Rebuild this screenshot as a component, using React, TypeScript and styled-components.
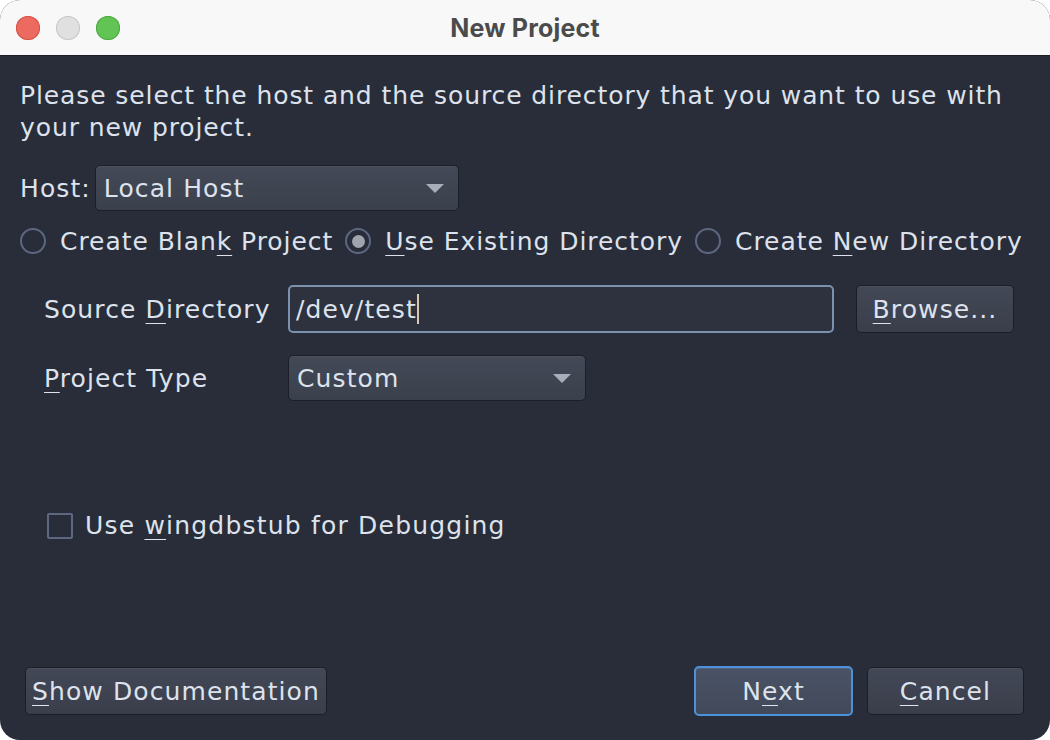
import styled, { createGlobalStyle } from "styled-components";

const GlobalStyle = createGlobalStyle`
  html, body {
    margin: 0;
    padding: 0;
    background: #ffffff;
  }
  body {
    font-family: "DejaVu Sans", "Noto Sans", sans-serif;
  }
`;

const Window = styled.div`
  width: 1050px;
  height: 740px;
  border-radius: 20px;
  overflow: hidden;
  display: flex;
  flex-direction: column;
  background: #282d39;
  color: #dde2ed;
  font-size: 25px;
  letter-spacing: 1.1px;
`;

const TitleBar = styled.div`
  height: 55px;
  flex: none;
  background: #f8f8f8;
  border-bottom: 1px solid #1b1e25;
  display: flex;
  align-items: center;
  position: relative;
`;

const Lights = styled.div`
  display: flex;
  gap: 16px;
  padding-left: 16px;
`;

const Light = styled.span<{ $fill: string; $ring: string }>`
  width: 24px;
  height: 24px;
  border-radius: 50%;
  background: ${(p) => p.$fill};
  box-shadow: inset 0 0 0 1px ${(p) => p.$ring};
`;

const Title = styled.div`
  position: absolute;
  left: 0;
  right: 0;
  text-align: center;
  font-family: Inter, "Liberation Sans", sans-serif;
  font-weight: 700;
  font-size: 25px;
  letter-spacing: 0.2px;
  color: #4b4b4b;
  pointer-events: none;
`;

const Body = styled.div`
  flex: 1;
  display: flex;
  flex-direction: column;
  padding: 24px 26px 24px 20px;
`;

const Intro = styled.p`
  margin: 0;
  line-height: 32px;
  letter-spacing: 0.9px;
  white-space: nowrap;
`;

const HostRow = styled.div`
  display: flex;
  align-items: center;
  gap: 4px;
  margin-top: 21px;
`;

const Combo = styled.div<{ $width: number }>`
  width: ${(p) => p.$width}px;
  height: 46px;
  box-sizing: border-box;
  display: flex;
  align-items: center;
  justify-content: space-between;
  padding: 0 14px 0 8px;
  border-radius: 5px;
  border: 1px solid #1c1f27;
  background: linear-gradient(#444957, #3b404d);
  box-shadow: inset 0 1px 0 #4c5160;
`;

const Arrow = styled.span`
  width: 0;
  height: 0;
  border-left: 9px solid transparent;
  border-right: 9px solid transparent;
  border-top: 9px solid #a9aebb;
`;

const RadioRow = styled.div`
  display: flex;
  align-items: center;
  margin-top: 14px;
  height: 32px;
  letter-spacing: 0.95px;
`;

const RadioItem = styled.label`
  display: flex;
  align-items: center;
  gap: 14px;
  margin-right: 12px;
  white-space: nowrap;
`;

const Radio = styled.span<{ $on?: boolean }>`
  width: 26px;
  height: 26px;
  flex: none;
  box-sizing: border-box;
  border-radius: 50%;
  border: 2px solid #5d6780;
  display: flex;
  align-items: center;
  justify-content: center;
  &::after {
    content: "";
    display: ${(p) => (p.$on ? "block" : "none")};
    width: 13px;
    height: 13px;
    border-radius: 50%;
    background: #a0a4ad;
  }
`;

const Key = styled.u`
  text-decoration-thickness: 1px;
  text-underline-offset: 5px;
`;

const Form = styled.div`
  display: grid;
  grid-template-columns: 244px auto;
  align-items: center;
  row-gap: 22px;
  padding-left: 24px;
  margin-top: 28px;
`;

const FieldLabel = styled.div`
  white-space: nowrap;
`;

const InputRow = styled.div`
  display: flex;
  align-items: center;
  gap: 22px;
`;

const TextInput = styled.div`
  width: 546px;
  height: 48px;
  box-sizing: border-box;
  border: 2px solid #7b91ad;
  border-radius: 5px;
  background: #2d323e;
  display: flex;
  align-items: center;
  padding-left: 6px;
`;

const Caret = styled.span`
  display: inline-block;
  width: 2px;
  height: 30px;
  background: #d8c9b0;
`;

const Button = styled.div<{ $width: number; $default?: boolean }>`
  width: ${(p) => p.$width}px;
  height: ${(p) => (p.$default ? 50 : 48)}px;
  box-sizing: border-box;
  display: flex;
  align-items: center;
  justify-content: center;
  border-radius: 5px;
  border: ${(p) => (p.$default ? "2px solid #4a92dc" : "1px solid #1a1d24")};
  background: ${(p) =>
    p.$default
      ? "linear-gradient(#4a5366, #414959)"
      : "linear-gradient(#434856, #3a3e4b)"};
  box-shadow: inset 0 1px 0 ${(p) => (p.$default ? "#56607a" : "#4b5060")};
  white-space: nowrap;
`;

const CheckRow = styled.label`
  display: flex;
  align-items: center;
  gap: 12px;
  padding-left: 27px;
  margin-top: 110px;
  letter-spacing: 1.2px;
`;

const Checkbox = styled.span`
  width: 26px;
  height: 26px;
  box-sizing: border-box;
  border: 2px solid #5d6780;
  border-radius: 2px;
`;

const Footer = styled.div`
  margin-top: auto;
  display: flex;
  align-items: center;
  padding-left: 5px;
`;

const FooterRight = styled.div`
  margin-left: auto;
  display: flex;
  align-items: center;
  gap: 14px;
`;

export default function App() {
  return (
    <>
      <GlobalStyle />
      <Window>
        <TitleBar>
          <Lights>
            <Light $fill="#ec6a5f" $ring="#d25548" />
            <Light $fill="#e0e0e0" $ring="#c8c8c8" />
            <Light $fill="#61c454" $ring="#50a943" />
          </Lights>
          <Title>New Project</Title>
        </TitleBar>
        <Body>
          <Intro>
            Please select the host and the source directory that you want to use with
            <br />
            your new project.
          </Intro>
          <HostRow>
            <span>Host:</span>
            <Combo $width={364}>
              <span>Local Host</span>
              <Arrow />
            </Combo>
          </HostRow>
          <RadioRow>
            <RadioItem>
              <Radio />
              <span>
                Create Blan<Key>k</Key> Project
              </span>
            </RadioItem>
            <RadioItem>
              <Radio $on />
              <span>
                <Key>U</Key>se Existing Directory
              </span>
            </RadioItem>
            <RadioItem>
              <Radio />
              <span>
                Create <Key>N</Key>ew Directory
              </span>
            </RadioItem>
          </RadioRow>
          <Form>
            <FieldLabel>
              Source <Key>D</Key>irectory
            </FieldLabel>
            <InputRow>
              <TextInput>
                /dev/test
                <Caret />
              </TextInput>
              <Button $width={158}>
                <span>
                  <Key>B</Key>rowse...
                </span>
              </Button>
            </InputRow>
            <FieldLabel>
              <Key>P</Key>roject Type
            </FieldLabel>
            <div>
              <Combo $width={298}>
                <span>Custom</span>
                <Arrow />
              </Combo>
            </div>
          </Form>
          <CheckRow>
            <Checkbox />
            <span>
              Use <Key>w</Key>ingdbstub for Debugging
            </span>
          </CheckRow>
          <Footer>
            <Button $width={302}>
              <span>
                <Key>S</Key>how Documentation
              </span>
            </Button>
            <FooterRight>
              <Button $width={159} $default>
                <span>
                  N<Key>e</Key>xt
                </span>
              </Button>
              <Button $width={157}>
                <span>
                  <Key>C</Key>ancel
                </span>
              </Button>
            </FooterRight>
          </Footer>
        </Body>
      </Window>
    </>
  );
}
